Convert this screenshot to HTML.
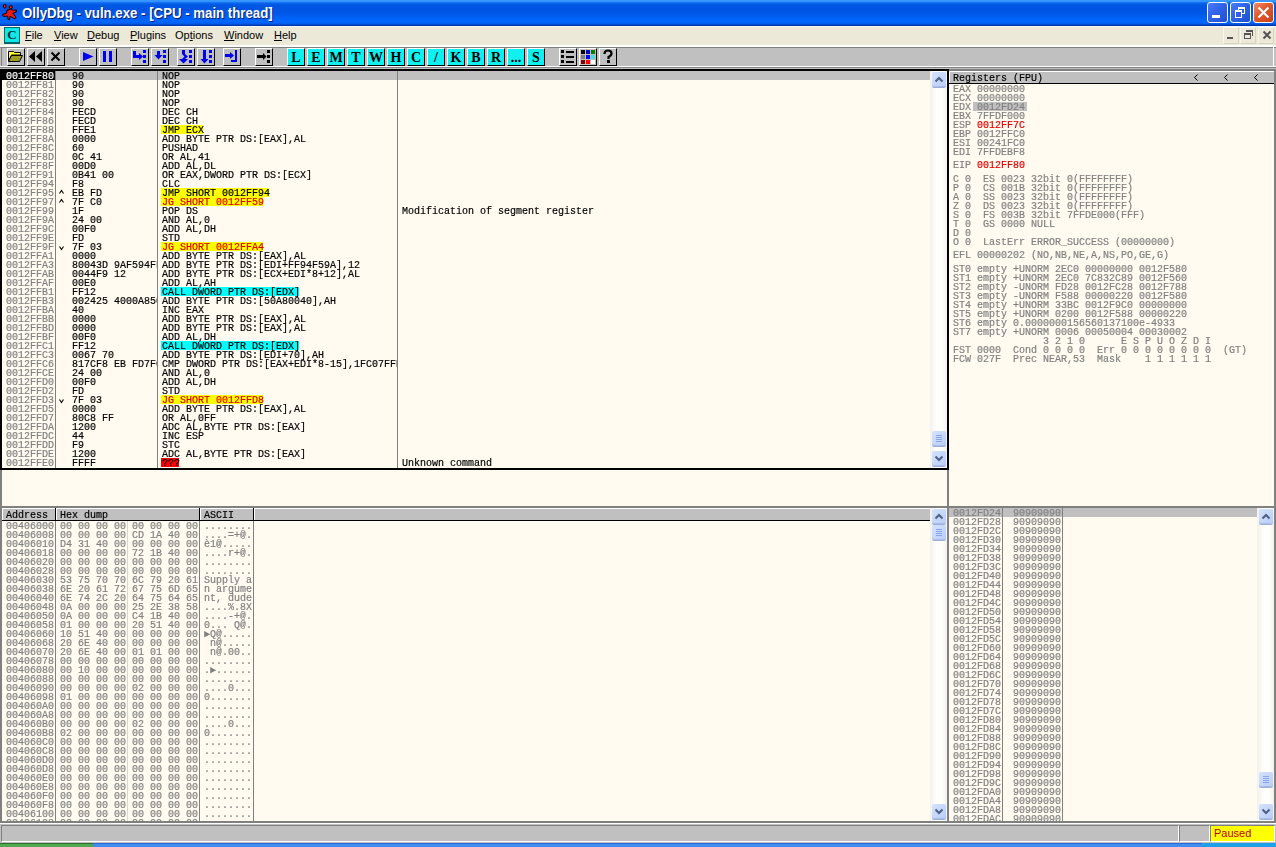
<!DOCTYPE html>
<html><head><meta charset="utf-8"><title>OllyDbg</title>
<style>
*{margin:0;padding:0;box-sizing:border-box}
html,body{width:1276px;height:847px;overflow:hidden;background:#C0C0C0}
body{position:relative;font-family:"Liberation Sans",sans-serif}
.a{position:absolute}
.m{position:absolute;font-family:"Liberation Mono",monospace;font-size:10px;line-height:9px;white-space:pre;color:#000;-webkit-text-stroke:0.18px;will-change:transform}
.g{color:#808080}
.r{color:#E00000}
.w{color:#fff}
.at{display:inline-block;width:6px;height:9px;line-height:9px;vertical-align:top;font-size:9px;text-align:center;-webkit-text-stroke:0.2px}
.btn{position:absolute;width:18px;height:18px;border-top:1px solid #fff;border-left:1px solid #fff;border-right:1px solid #000;border-bottom:1px solid #000;background:#C0C0C0}
.cy{background:#0FF0F0}
.cy span{position:absolute;left:0;width:16px;top:2px;text-align:center;font:bold 14px/14px "Liberation Serif",serif;color:#000}
.btn svg{position:absolute;left:0;top:0}
.sb{position:absolute;width:17px;background:#FCFCF7}
.sbb{position:absolute;width:14px;height:15px;border-radius:2px;background:linear-gradient(135deg,#D5E2FC,#B9CDF7);box-shadow:inset 0 -1px 0 #A8BDEA, 0 1px 0 #9DAFD6}
</style></head><body>

<div class="a" style="left:0;top:0;width:1276px;height:26px;background:linear-gradient(to bottom,#3C9CFF 0px,#3390FF 1.5px,#0A66F0 3px,#0058E2 5px,#0054E0 9px,#0058EA 14px,#0062F8 18px,#0068FF 22px,#0058E6 24px,#0038A8 25.5px,#0030A0 26px)"></div>
<svg class="a" style="left:0;top:0" width="22" height="26" viewBox="0 0 22 26">
<g fill="#E81818" stroke="#1A0000" stroke-width="1" stroke-linejoin="round">
<ellipse cx="4.8" cy="6.2" rx="1.4" ry="1.9"/>
<circle cx="10.8" cy="7.2" r="1.6"/>
<path d="M7 10.2 L10.2 9.3 L13.5 10.2 L16.5 10 L16.2 12 L12.8 13.2 L16 17.2 L15 19 L12 17.3 L10 16.2 L9.6 19.6 L8 19.4 L7.8 16.2 L3.2 16.3 L2.6 14.4 L6.5 13.2 Z"/>
</g></svg>
<div class="a" style="left:23px;top:7px;font:bold 14px/15px 'Liberation Sans',sans-serif;color:#0A1E6E;white-space:pre;transform-origin:0 0;transform:scaleX(0.945)">OllyDbg - vuln.exe - [CPU - main thread]</div>
<div class="a" style="left:22px;top:6px;font:bold 14px/15px 'Liberation Sans',sans-serif;color:#fff;white-space:pre;transform-origin:0 0;transform:scaleX(0.945)">OllyDbg - vuln.exe - [CPU - main thread]</div>
<div class="a" style="left:1207px;top:2px;width:21px;height:21px;border:1px solid #fff;border-radius:3px;background:linear-gradient(135deg,#4A7CF8 0%,#2D62E8 50%,#1E50D0 100%)"></div>
<div class="a" style="left:1230px;top:2px;width:21px;height:21px;border:1px solid #fff;border-radius:3px;background:linear-gradient(135deg,#4A7CF8 0%,#2D62E8 50%,#1E50D0 100%)"></div>
<div class="a" style="left:1253px;top:2px;width:21px;height:21px;border:1px solid #fff;border-radius:3px;background:linear-gradient(135deg,#F08A62 0%,#E2582C 45%,#C8401C 100%)"></div>
<div class="a" style="left:1212px;top:15px;width:8px;height:3px;background:#fff"></div>
<div class="a" style="left:1238px;top:7px;width:7px;height:7px;border:1px solid #fff;border-top-width:2px"></div>
<div class="a" style="left:1235px;top:10px;width:7px;height:8px;border:1px solid #fff;border-top-width:2px;background:#2D62E8"></div>
<svg class="a" style="left:1257px;top:6px" width="13" height="13"><path d="M1.5 1.5 L11.5 11.5 M11.5 1.5 L1.5 11.5" stroke="#fff" stroke-width="2.2"/></svg>
<div class="a" style="left:0;top:26px;width:1276px;height:19px;background:#ECE9D8"></div>
<div class="a" style="left:0;top:26px;width:1276px;height:1px;background:#F6F6FA"></div>
<div class="a" style="left:0;top:45px;width:1276px;height:2px;background:#fff"></div>
<div class="a" style="left:4px;top:27px;width:16px;height:17px;background:#10E8E8;border:1px solid #006868;border-bottom-width:2px;font:bold 13px/14px 'Liberation Serif',serif;color:#003030;text-align:center">C</div>
<div class="a" style="left:25px;top:29px;font:11px/13px 'Liberation Sans',sans-serif;color:#000;white-space:pre"><u>F</u>ile</div>
<div class="a" style="left:54px;top:29px;font:11px/13px 'Liberation Sans',sans-serif;color:#000;white-space:pre"><u>V</u>iew</div>
<div class="a" style="left:87px;top:29px;font:11px/13px 'Liberation Sans',sans-serif;color:#000;white-space:pre"><u>D</u>ebug</div>
<div class="a" style="left:130px;top:29px;font:11px/13px 'Liberation Sans',sans-serif;color:#000;white-space:pre"><u>P</u>lugins</div>
<div class="a" style="left:175px;top:29px;font:11px/13px 'Liberation Sans',sans-serif;color:#000;white-space:pre">Op<u>t</u>ions</div>
<div class="a" style="left:224px;top:29px;font:11px/13px 'Liberation Sans',sans-serif;color:#000;white-space:pre"><u>W</u>indow</div>
<div class="a" style="left:274px;top:29px;font:11px/13px 'Liberation Sans',sans-serif;color:#000;white-space:pre"><u>H</u>elp</div>
<div class="a" style="left:1223px;top:27px;width:16px;height:17px;border-right:1px solid #D8D4C4;border-bottom:1px solid #D8D4C4;border-left:1px solid #F8F6EE;border-top:1px solid #F8F6EE"></div>
<div class="a" style="left:1240px;top:27px;width:16px;height:17px;border-right:1px solid #D8D4C4;border-bottom:1px solid #D8D4C4;border-left:1px solid #F8F6EE;border-top:1px solid #F8F6EE"></div>
<div class="a" style="left:1258px;top:27px;width:16px;height:17px;border-right:1px solid #D8D4C4;border-bottom:1px solid #D8D4C4;border-left:1px solid #F8F6EE;border-top:1px solid #F8F6EE"></div>
<div class="a" style="left:1227px;top:37px;width:6px;height:2px;background:#555"></div>
<div class="a" style="left:1246px;top:30px;width:7px;height:6px;border-top:2px solid #555;border-right:1px solid #555"></div>
<div class="a" style="left:1244px;top:33px;width:7px;height:6px;border:1px solid #555;border-top-width:2px;background:#ECE9D8"></div>
<svg class="a" style="left:1262px;top:30px" width="10" height="10"><path d="M1.5 1.5 L8.5 8.5 M8.5 1.5 L1.5 8.5" stroke="#555" stroke-width="2"/></svg>
<div class="a" style="left:0;top:47px;width:1276px;height:1px;background:#808080"></div>
<div class="a" style="left:0;top:48px;width:1276px;height:18px;background:#C0C0C0"></div>
<div class="a" style="left:1px;top:47px;width:1px;height:20px;background:#808080"></div>
<div class="a" style="left:1273px;top:47px;width:1px;height:20px;background:#fff"></div>
<div class="a" style="left:0;top:66px;width:1276px;height:1px;background:#fff"></div>
<div class="a" style="left:0;top:67px;width:1276px;height:1px;background:#808080"></div>
<div class="a" style="left:0;top:68px;width:1276px;height:1px;background:#C0C0C0"></div>
<div class="btn " style="left:7px;top:48px"><svg width="16" height="16"><path d="M0.5 2.5h5l1 1h6v2.5H3.5L0.5 12z" fill="#FFFF40" stroke="#000" stroke-width="1"/><path d="M0.5 12.5 L3.5 6.5 H14.5 L11.5 12.5 Z" fill="#9C9C22" stroke="#000" stroke-width="1"/></svg></div>
<div class="btn " style="left:27px;top:48px"><svg width="16" height="16"><path d="M1 7.5 L7 2 V13Z M8 7.5 L14 2 V13Z" fill="#000"/></svg></div>
<div class="btn " style="left:47px;top:48px"><svg width="16" height="16"><path d="M3.5 3.5 L11.5 11.5 M11.5 3.5 L3.5 11.5" stroke="#000" stroke-width="2"/></svg></div>
<div class="btn " style="left:79px;top:48px"><svg width="16" height="16"><path d="M3 3 L13.5 7.5 L3 12Z" fill="#0000F0"/></svg></div>
<div class="btn " style="left:99px;top:48px"><svg width="16" height="16"><rect x="3" y="2" width="3" height="11" fill="#0000F0"/><rect x="9" y="2" width="3" height="11" fill="#0000F0"/></svg></div>
<div class="btn " style="left:131px;top:48px"><svg width="16" height="16"><path d="M1 2h3v4h3V4l4 3.5-4 3.5V9H1z" fill="#0000F0"/><rect x="11" y="1" width="3" height="3" fill="#0000F0"/><rect x="11" y="6" width="3" height="3" fill="#0000F0"/><rect x="11" y="11" width="3" height="3" fill="#0000F0"/></svg></div>
<div class="btn " style="left:151px;top:48px"><svg width="16" height="16"><path d="M5 2h3v4h2.5L6.5 10.5 2.5 6H5z" fill="#0000F0"/><rect x="11" y="1" width="3" height="3" fill="#0000F0"/><rect x="11" y="6" width="3" height="3" fill="#0000F0"/><rect x="11" y="11" width="3" height="3" fill="#0000F0"/></svg></div>
<div class="btn " style="left:177px;top:48px"><svg width="16" height="16"><path d="M4 1h3v4l3 2.5-3 2.5h3l-4.5 4.5L1 10h3l2.5-2.5L4 5z" fill="#0000F0"/><rect x="11" y="1" width="3" height="3" fill="#0000F0"/><rect x="11" y="6" width="3" height="3" fill="#0000F0"/><rect x="11" y="11" width="3" height="3" fill="#0000F0"/></svg></div>
<div class="btn " style="left:197px;top:48px"><svg width="16" height="16"><path d="M5 1h3v9h2.5L6.5 14.5 2.5 10H5z" fill="#0000F0"/><rect x="11" y="1" width="3" height="3" fill="#0000F0"/><rect x="11" y="6" width="3" height="3" fill="#0000F0"/><rect x="11" y="11" width="3" height="3" fill="#0000F0"/></svg></div>
<div class="btn " style="left:223px;top:48px"><svg width="16" height="16"><path d="M1 5h5V3l4 3.5-4 3.5V8H1z" fill="#0000F0"/><path d="M11 1h2v12H7v-2h4z" fill="#0000F0"/></svg></div>
<div class="btn " style="left:255px;top:48px"><svg width="16" height="16"><path d="M1 6h6V4l3.5 3.5L7 11V9H1z" fill="#000"/><rect x="11" y="1" width="3" height="3"/><rect x="11" y="6" width="3" height="3"/><rect x="11" y="11" width="3" height="3"/></svg></div>
<div class="btn cy" style="left:287px;top:48px"><span>L</span></div>
<div class="btn cy" style="left:307px;top:48px"><span>E</span></div>
<div class="btn cy" style="left:327px;top:48px"><span>M</span></div>
<div class="btn cy" style="left:347px;top:48px"><span>T</span></div>
<div class="btn cy" style="left:367px;top:48px"><span>W</span></div>
<div class="btn cy" style="left:387px;top:48px"><span>H</span></div>
<div class="btn cy" style="left:407px;top:48px"><span>C</span></div>
<div class="btn cy" style="left:427px;top:48px"><span>/</span></div>
<div class="btn cy" style="left:447px;top:48px"><span>K</span></div>
<div class="btn cy" style="left:467px;top:48px"><span>B</span></div>
<div class="btn cy" style="left:487px;top:48px"><span>R</span></div>
<div class="btn cy" style="left:507px;top:48px"><span>...</span></div>
<div class="btn cy" style="left:527px;top:48px"><span>S</span></div>
<div class="btn " style="left:559px;top:48px"><svg width="16" height="16"><rect x="1" y="1" width="3" height="3"/><rect x="1" y="6" width="3" height="3"/><rect x="1" y="11" width="3" height="3"/><rect x="6" y="2" width="8" height="2"/><rect x="6" y="7" width="8" height="2"/><rect x="6" y="12" width="8" height="2"/></svg></div>
<div class="btn " style="left:579px;top:48px"><svg width="16" height="16"><rect x="1" y="1" width="4" height="4" fill="#000"/><rect x="6" y="1" width="4" height="4" fill="#0000C0"/><rect x="11" y="1" width="4" height="4" fill="#008000"/><rect x="1" y="6" width="4" height="4" fill="#808080"/><rect x="6" y="6" width="4" height="4" fill="#0000FF"/><rect x="11" y="6" width="4" height="4" fill="#40E0E0"/><rect x="1" y="11" width="4" height="4" fill="#800000"/><rect x="6" y="11" width="4" height="4" fill="#FF0000"/><rect x="11" y="11" width="4" height="4" fill="#fff"/></svg></div>
<div class="btn " style="left:599px;top:48px"><svg width="16" height="16"><path d="M4.5 5 Q4.5 1.5 8 1.5 Q11.5 1.5 11.5 4.5 Q11.5 6.5 8.5 8 V10" fill="none" stroke="#000" stroke-width="2.2"/><rect x="7" y="11" width="3" height="3"/></svg></div>
<div class="a" style="left:0;top:69px;width:1276px;height:754px;background:#FFFBF0"></div>
<div class="a" style="left:0px;top:69px;width:1276px;height:2px;background:#808080"></div>
<div class="a" style="left:0px;top:69px;width:2px;height:754px;background:#808080"></div>
<div class="a" style="left:1274px;top:69px;width:2px;height:754px;background:#808080"></div>
<div class="a" style="left:947px;top:69px;width:2px;height:754px;background:#808080"></div>
<div class="a" style="left:0px;top:506px;width:1276px;height:2px;background:#808080"></div>
<div class="a" style="left:0px;top:821px;width:1276px;height:2px;background:#808080"></div>
<div class="a" style="left:2px;top:71px;width:53px;height:9px;background:#000"></div>
<div class="a" style="left:56px;top:71px;width:874px;height:9px;background:#C0C0C0"></div>
<div class="a" style="left:55px;top:71px;width:1px;height:397px;background:#808080"></div>
<div class="a" style="left:157px;top:71px;width:1px;height:397px;background:#808080"></div>
<div class="a" style="left:397px;top:71px;width:1px;height:397px;background:#808080"></div>
<div class="a" style="left:161px;top:125px;width:42px;height:9px;background:#FFFF00"></div>
<div class="a" style="left:161px;top:188px;width:108px;height:9px;background:#FFFF00"></div>
<div class="a" style="left:161px;top:197px;width:102px;height:9px;background:#FFFF00"></div>
<div class="a" style="left:161px;top:242px;width:102px;height:9px;background:#FFFF00"></div>
<div class="a" style="left:161px;top:287px;width:138px;height:9px;background:#00FFFF"></div>
<div class="a" style="left:161px;top:341px;width:138px;height:9px;background:#00FFFF"></div>
<div class="a" style="left:161px;top:395px;width:102px;height:9px;background:#FFFF00"></div>
<div class="a" style="left:161px;top:458px;width:18px;height:9px;background:#FF0000"></div>
<div class="m" style="left:5.5px;top:72px"><span class="w">0012FF80</span>
<span class="g">0012FF81</span>
<span class="g">0012FF82</span>
<span class="g">0012FF83</span>
<span class="g">0012FF84</span>
<span class="g">0012FF86</span>
<span class="g">0012FF88</span>
<span class="g">0012FF8A</span>
<span class="g">0012FF8C</span>
<span class="g">0012FF8D</span>
<span class="g">0012FF8F</span>
<span class="g">0012FF91</span>
<span class="g">0012FF94</span>
<span class="g">0012FF95</span>
<span class="g">0012FF97</span>
<span class="g">0012FF99</span>
<span class="g">0012FF9A</span>
<span class="g">0012FF9C</span>
<span class="g">0012FF9E</span>
<span class="g">0012FF9F</span>
<span class="g">0012FFA1</span>
<span class="g">0012FFA3</span>
<span class="g">0012FFAB</span>
<span class="g">0012FFAF</span>
<span class="g">0012FFB1</span>
<span class="g">0012FFB3</span>
<span class="g">0012FFBA</span>
<span class="g">0012FFBB</span>
<span class="g">0012FFBD</span>
<span class="g">0012FFBF</span>
<span class="g">0012FFC1</span>
<span class="g">0012FFC3</span>
<span class="g">0012FFC6</span>
<span class="g">0012FFCE</span>
<span class="g">0012FFD0</span>
<span class="g">0012FFD2</span>
<span class="g">0012FFD3</span>
<span class="g">0012FFD5</span>
<span class="g">0012FFD7</span>
<span class="g">0012FFDA</span>
<span class="g">0012FFDC</span>
<span class="g">0012FFDD</span>
<span class="g">0012FFDE</span>
<span class="g">0012FFE0</span></div>
<svg class="a" style="left:58px;top:188px" width="8" height="9"><path d="M1.5 5.5 L3.5 2.5 L5.5 5.5" fill="none" stroke="#000" stroke-width="1.1"/></svg>
<svg class="a" style="left:58px;top:197px" width="8" height="9"><path d="M1.5 5.5 L3.5 2.5 L5.5 5.5" fill="none" stroke="#000" stroke-width="1.1"/></svg>
<svg class="a" style="left:58px;top:242px" width="8" height="9"><path d="M1.5 4.5 L3.5 7.5 L5.5 4.5" fill="none" stroke="#000" stroke-width="1.1"/></svg>
<svg class="a" style="left:58px;top:395px" width="8" height="9"><path d="M1.5 4.5 L3.5 7.5 L5.5 4.5" fill="none" stroke="#000" stroke-width="1.1"/></svg>
<div class="a" style="left:56px;top:71px;width:101px;height:397px;overflow:hidden"><div class="m" style="left:3.5px;top:1px">  90
  90
  90
  90
  FECD
  FECD
  FFE1
  0000
  60
  0C 41
  00D0
  0B41 00
  F8
  EB FD
  7F C0
  1F
  24 00
  00F0
  FD
  7F 03
  0000
  80043D 9AF594FF 12
  0044F9 12
  00E0
  FF12
  002425 4000A850
  40
  0000
  0000
  00F0
  FF12
  0067 70
  817CF8 EB FD7FC01F
  24 00
  00F0
  FD
  7F 03
  0000
  80C8 FF
  1200
  44
  F9
  1200
  FFFF</div></div>
<div class="a" style="left:158px;top:71px;width:239px;height:397px;overflow:hidden"><div class="m" style="left:3.5px;top:1px">NOP
NOP
NOP
NOP
DEC CH
DEC CH
JMP ECX
ADD BYTE PTR DS:[EAX],AL
PUSHAD
OR AL,41
ADD AL,DL
OR EAX,DWORD PTR DS:[ECX]
CLC
JMP SHORT 0012FF94
<span class="r">JG SHORT 0012FF59</span>
POP DS
AND AL,0
ADD AL,DH
STD
<span class="r">JG SHORT 0012FFA4</span>
ADD BYTE PTR DS:[EAX],AL
ADD BYTE PTR DS:[EDI+FF94F59A],12
ADD BYTE PTR DS:[ECX+EDI*8+12],AL
ADD AL,AH
CALL DWORD PTR DS:[EDX]
ADD BYTE PTR DS:[50A80040],AH
INC EAX
ADD BYTE PTR DS:[EAX],AL
ADD BYTE PTR DS:[EAX],AL
ADD AL,DH
CALL DWORD PTR DS:[EDX]
ADD BYTE PTR DS:[EDI+70],AH
CMP DWORD PTR DS:[EAX+EDI*8-15],1FC07FFD
AND AL,0
ADD AL,DH
STD
<span class="r">JG SHORT 0012FFD8</span>
ADD BYTE PTR DS:[EAX],AL
OR AL,0FF
ADC AL,BYTE PTR DS:[EAX]
INC ESP
STC
ADC AL,BYTE PTR DS:[EAX]
???</div></div>
<div class="m" style="left:401.5px;top:72px">














Modification of segment register



























Unknown command</div>
<div class="a" style="left:0px;top:69px;width:949px;height:2px;background:#000"></div>
<div class="a" style="left:0px;top:69px;width:2px;height:401px;background:#000"></div>
<div class="a" style="left:947px;top:69px;width:2px;height:401px;background:#000"></div>
<div class="a" style="left:0px;top:468px;width:949px;height:2px;background:#000"></div>
<div class="sb" style="left:930px;top:71px;height:397px;background:linear-gradient(to right,#F3F1EC,#FEFEFB 40%,#FEFEFB 70%,#F3F1EC)"></div>
<div class="sbb" style="left:932px;top:72px"><svg width="14" height="15" style="position:absolute;left:0;top:0"><path d="M3.5 9.5 L7 6 L10.5 9.5" fill="none" stroke="#4D6185" stroke-width="2"/></svg></div>
<div class="sbb" style="left:932px;top:431px"><svg width="14" height="15" style="position:absolute;left:0;top:0"><path d="M4 4.5h6 M4 6.5h6 M4 8.5h6 M4 10.5h6" stroke="#8AA6E6" stroke-width="1"/></svg></div>
<div class="sbb" style="left:932px;top:451px"><svg width="14" height="15" style="position:absolute;left:0;top:0"><path d="M3.5 5.5 L7 9 L10.5 5.5" fill="none" stroke="#4D6185" stroke-width="2"/></svg></div>
<div class="a" style="left:2px;top:508px;width:928px;height:1px;background:#fff"></div>
<div class="a" style="left:2px;top:509px;width:928px;height:11px;background:#C0C0C0"></div>
<div class="a" style="left:2px;top:520px;width:928px;height:1px;background:#000"></div>
<div class="a" style="left:2px;top:508px;width:1px;height:12px;background:#fff"></div>
<div class="a" style="left:55px;top:508px;width:1px;height:13px;background:#000"></div>
<div class="a" style="left:56px;top:508px;width:1px;height:12px;background:#fff"></div>
<div class="a" style="left:199px;top:508px;width:1px;height:13px;background:#000"></div>
<div class="a" style="left:200px;top:508px;width:1px;height:12px;background:#fff"></div>
<div class="a" style="left:253px;top:508px;width:1px;height:13px;background:#000"></div>
<div class="a" style="left:254px;top:508px;width:1px;height:12px;background:#fff"></div>
<div class="m" style="left:5.5px;top:511px">Address</div>
<div class="m" style="left:59.5px;top:511px">Hex dump</div>
<div class="m" style="left:203.5px;top:511px">ASCII</div>
<div class="a" style="left:55px;top:521px;width:1px;height:300px;background:#808080"></div>
<div class="a" style="left:199px;top:521px;width:1px;height:300px;background:#808080"></div>
<div class="a" style="left:253px;top:521px;width:1px;height:300px;background:#808080"></div>
<div class="a" style="left:127px;top:521px;width:1px;height:300px;background:#D8D8D0"></div>
<div class="a" style="left:2px;top:521px;width:928px;height:300px;overflow:hidden">
<div class="m g" style="left:3.5px;top:1px">00406000
00406008
00406010
00406018
00406020
00406028
00406030
00406038
00406040
00406048
00406050
00406058
00406060
00406068
00406070
00406078
00406080
00406088
00406090
00406098
004060A0
004060A8
004060B0
004060B8
004060C0
004060C8
004060D0
004060D8
004060E0
004060E8
004060F0
004060F8
00406100
00406108</div>
<div class="m g" style="left:57.5px;top:1px">00 00 00 00 
00 00 00 00 
D4 31 40 00 
00 00 00 00 
00 00 00 00 
00 00 00 00 
53 75 70 70 
6E 20 61 72 
6E 74 2C 20 
0A 00 00 00 
0A 00 00 00 
01 00 00 00 
10 51 40 00 
20 6E 40 00 
20 6E 40 00 
00 00 00 00 
00 10 00 00 
00 00 00 00 
00 00 00 00 
01 00 00 00 
00 00 00 00 
00 00 00 00 
00 00 00 00 
02 00 00 00 
00 00 00 00 
00 00 00 00 
00 00 00 00 
00 00 00 00 
00 00 00 00 
00 00 00 00 
00 00 00 00 
00 00 00 00 
00 00 00 00 
00 00 00 00 </div>
<div class="m g" style="left:129.5px;top:1px">00 00 00 00
CD 1A 40 00
00 00 00 00
72 1B 40 00
00 00 00 00
00 00 00 00
6C 79 20 61
67 75 6D 65
64 75 64 65
25 2E 38 58
C4 1B 40 00
20 51 40 00
00 00 00 00
00 00 00 00
01 01 00 00
00 00 00 00
00 00 00 00
00 00 00 00
02 00 00 00
00 00 00 00
00 00 00 00
00 00 00 00
02 00 00 00
00 00 00 00
00 00 00 00
00 00 00 00
00 00 00 00
00 00 00 00
00 00 00 00
00 00 00 00
00 00 00 00
00 00 00 00
00 00 00 00
00 00 00 00</div>
<div class="m g" style="left:201.5px;top:1px">........
....=+<span class="at">@</span>.
è1<span class="at">@</span>.....
....r+<span class="at">@</span>.
........
........
Supply a
n argume
nt, dude
....%.8X
....-+<span class="at">@</span>.
0... Q<span class="at">@</span>.
►Q<span class="at">@</span>.....
 n<span class="at">@</span>.....
 n<span class="at">@</span>.00..
........
.►......
........
....0...
0.......
........
........
....0...
0.......
........
........
........
........
........
........
........
........
........
........</div>
</div>
<div class="sb" style="left:930px;top:508px;height:313px;background:linear-gradient(to right,#F3F1EC,#FEFEFB 40%,#FEFEFB 70%,#F3F1EC)"></div>
<div class="sbb" style="left:932px;top:509px"><svg width="14" height="15" style="position:absolute;left:0;top:0"><path d="M3.5 9.5 L7 6 L10.5 9.5" fill="none" stroke="#4D6185" stroke-width="2"/></svg></div>
<div class="sbb" style="left:932px;top:525px"><svg width="14" height="15" style="position:absolute;left:0;top:0"><path d="M4 4.5h6 M4 6.5h6 M4 8.5h6 M4 10.5h6" stroke="#8AA6E6" stroke-width="1"/></svg></div>
<div class="sbb" style="left:932px;top:804px"><svg width="14" height="15" style="position:absolute;left:0;top:0"><path d="M3.5 5.5 L7 9 L10.5 5.5" fill="none" stroke="#4D6185" stroke-width="2"/></svg></div>
<div class="a" style="left:949px;top:71px;width:325px;height:1px;background:#fff"></div>
<div class="a" style="left:949px;top:72px;width:325px;height:11px;background:#C0C0C0"></div>
<div class="a" style="left:949px;top:83px;width:325px;height:1px;background:#000"></div>
<div class="a" style="left:949px;top:71px;width:1px;height:12px;background:#fff"></div>
<div class="m" style="left:952.5px;top:74px">Registers (FPU)</div>
<svg class="a" style="left:1193px;top:73px" width="6" height="9"><path d="M4.5 1.5 L1.5 4.5 L4.5 7.5" fill="none" stroke="#000" stroke-width="1"/></svg>
<svg class="a" style="left:1223px;top:73px" width="6" height="9"><path d="M4.5 1.5 L1.5 4.5 L4.5 7.5" fill="none" stroke="#000" stroke-width="1"/></svg>
<svg class="a" style="left:1253px;top:73px" width="6" height="9"><path d="M4.5 1.5 L1.5 4.5 L4.5 7.5" fill="none" stroke="#000" stroke-width="1"/></svg>
<div class="m g" style="left:952.5px;top:85px">EAX 00000000</div>
<div class="m g" style="left:952.5px;top:94px">ECX 00000000</div>
<div class="a" style="left:973px;top:102px;width:54px;height:9px;background:#C0C0C0"></div>
<div class="m g" style="left:952.5px;top:103px">EDX 0012FD24</div>
<div class="m g" style="left:952.5px;top:112px">EBX 7FFDF000</div>
<div class="m g" style="left:952.5px;top:121px">ESP <span class="r">0012FF7C</span></div>
<div class="m g" style="left:952.5px;top:130px">EBP 0012FFC0</div>
<div class="m g" style="left:952.5px;top:139px">ESI 00241FC0</div>
<div class="m g" style="left:952.5px;top:148px">EDI 7FFDEBF8</div>
<div class="m g" style="left:952.5px;top:161px">EIP <span class="r">0012FF80</span></div>
<div class="m g" style="left:952.5px;top:175px">C 0  ES 0023 32bit 0(FFFFFFFF)
P 0  CS 001B 32bit 0(FFFFFFFF)
A 0  SS 0023 32bit 0(FFFFFFFF)
Z 0  DS 0023 32bit 0(FFFFFFFF)
S 0  FS 003B 32bit 7FFDE000(FFF)
T 0  GS 0000 NULL
D 0
O 0  LastErr ERROR_SUCCESS (00000000)</div>
<div class="m g" style="left:952.5px;top:251px">EFL 00000202 (NO,NB,NE,A,NS,PO,GE,G)</div>
<div class="m g" style="left:952.5px;top:265px">ST0 empty +UNORM 2EC0 00000000 0012F580
ST1 empty +UNORM 2EC0 7C832C89 0012F560
ST2 empty -UNORM FD28 0012FC28 0012F788
ST3 empty -UNORM F588 00000220 0012F580
ST4 empty +UNORM 33BC 0012F9C0 00000000
ST5 empty +UNORM 0200 0012F588 00000220
ST6 empty 0.0000000156560137100e-4933
ST7 empty +UNORM 0006 00050004 00030002
               3 2 1 0      E S P U O Z D I
FST 0000  Cond 0 0 0 0  Err 0 0 0 0 0 0 0 0  (GT)
FCW 027F  Prec NEAR,53  Mask    1 1 1 1 1 1</div>
<div class="a" style="left:949px;top:508px;width:308px;height:9px;background:#C0C0C0"></div>
<div class="a" style="left:1002px;top:508px;width:1px;height:313px;background:#808080"></div>
<div class="a" style="left:1062px;top:508px;width:1px;height:313px;background:#808080"></div>
<div class="a" style="left:949px;top:508px;width:308px;height:313px;overflow:hidden">
<div class="m g" style="left:3.5px;top:1px">0012FD24
0012FD28
0012FD2C
0012FD30
0012FD34
0012FD38
0012FD3C
0012FD40
0012FD44
0012FD48
0012FD4C
0012FD50
0012FD54
0012FD58
0012FD5C
0012FD60
0012FD64
0012FD68
0012FD6C
0012FD70
0012FD74
0012FD78
0012FD7C
0012FD80
0012FD84
0012FD88
0012FD8C
0012FD90
0012FD94
0012FD98
0012FD9C
0012FDA0
0012FDA4
0012FDA8
0012FDAC</div>
<div class="m g" style="left:57.5px;top:1px"> 90909090
 90909090
 90909090
 90909090
 90909090
 90909090
 90909090
 90909090
 90909090
 90909090
 90909090
 90909090
 90909090
 90909090
 90909090
 90909090
 90909090
 90909090
 90909090
 90909090
 90909090
 90909090
 90909090
 90909090
 90909090
 90909090
 90909090
 90909090
 90909090
 90909090
 90909090
 90909090
 90909090
 90909090
 90909090</div>
</div>
<div class="sb" style="left:1257px;top:508px;height:313px;background:linear-gradient(to right,#F3F1EC,#FEFEFB 40%,#FEFEFB 70%,#F3F1EC)"></div>
<div class="sbb" style="left:1259px;top:509px"><svg width="14" height="15" style="position:absolute;left:0;top:0"><path d="M3.5 9.5 L7 6 L10.5 9.5" fill="none" stroke="#4D6185" stroke-width="2"/></svg></div>
<div class="sbb" style="left:1259px;top:772px"><svg width="14" height="15" style="position:absolute;left:0;top:0"><path d="M4 4.5h6 M4 6.5h6 M4 8.5h6 M4 10.5h6" stroke="#8AA6E6" stroke-width="1"/></svg></div>
<div class="sbb" style="left:1259px;top:804px"><svg width="14" height="15" style="position:absolute;left:0;top:0"><path d="M3.5 5.5 L7 9 L10.5 5.5" fill="none" stroke="#4D6185" stroke-width="2"/></svg></div>
<div class="a" style="left:0px;top:823px;width:1276px;height:1px;background:#fff"></div>
<div class="a" style="left:0px;top:824px;width:1276px;height:19px;background:#C0C0C0"></div>
<div class="a" style="left:1px;top:825px;width:1178px;height:17px;border-top:1px solid #808080;border-left:1px solid #808080;border-bottom:1px solid #fff;border-right:1px solid #fff;background:#C0C0C0"></div>
<div class="a" style="left:1179px;top:825px;width:31px;height:17px;border-top:1px solid #808080;border-left:1px solid #808080;border-bottom:1px solid #fff;border-right:1px solid #fff;background:#C0C0C0"></div>
<div class="a" style="left:1210px;top:825px;width:65px;height:17px;border-top:1px solid #808080;border-left:1px solid #808080;border-bottom:1px solid #fff;border-right:1px solid #fff;background:#FFFF00"></div>
<div class="a" style="left:1214px;top:827px;font:11px/13px 'Liberation Sans',sans-serif;color:#C00000">Paused</div>
<div class="a" style="left:0px;top:843px;width:1276px;height:1px;background:#3168D5"></div>
<div class="a" style="left:0px;top:844px;width:1276px;height:3px;background:#3F8CF3"></div>
<div class="a" style="left:0px;top:843px;width:93px;height:1px;background:#2F6A2F"></div>
<div class="a" style="left:0px;top:844px;width:93px;height:3px;background:#4FAA4F"></div>
<div class="a" style="left:1202px;top:843px;width:74px;height:4px;background:#1EA0E8"></div>
</body></html>
